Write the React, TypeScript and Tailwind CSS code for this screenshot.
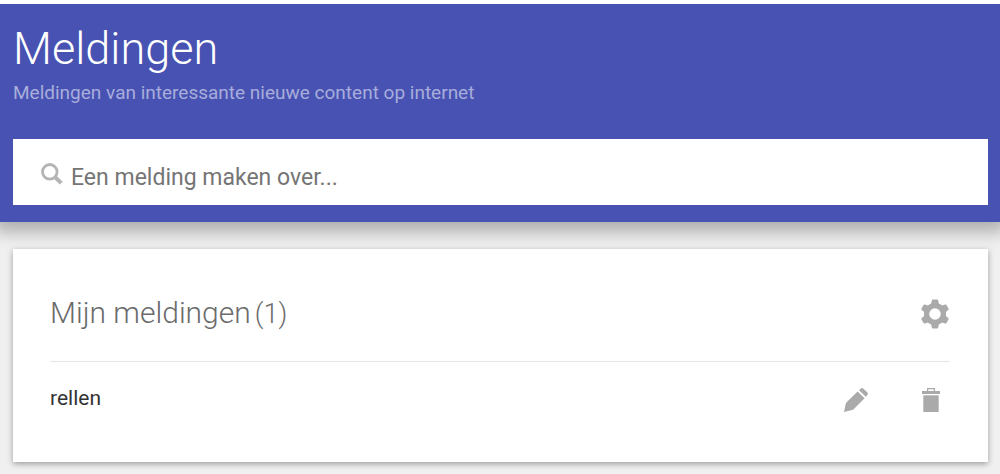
import { useState } from "react";

type Alert = { id: number; query: string };

const INITIAL_ALERTS: Alert[] = [{ id: 1, query: "rellen" }];

const GEAR_TEETH = [0, 60, 120, 180, 240, 300];

function SearchIcon() {
  return (
    <svg viewBox="0 0 22 22" className="size-[22px]" fill="none" stroke="#b4b4b4" aria-hidden="true">
      <circle cx="8.8" cy="8.8" r="7.3" strokeWidth="2.8" />
      <path d="M14 14 20.2 20.2" strokeWidth="4" />
    </svg>
  );
}

function GearIcon() {
  return (
    <svg viewBox="0 0 28 30" className="h-[30px] w-7" fill="#aaaaaa" aria-hidden="true">
      <circle cx="14" cy="15" r="8.4" fill="none" stroke="#aaaaaa" strokeWidth="5.2" />
      {GEAR_TEETH.map((angle) => (
        <path
          key={angle}
          transform={`rotate(${angle} 14 15)`}
          d="M8.4 6.6 10.2 4.6 10.8 1.6Q11 .6 12 .6H16Q17 .6 17.2 1.6L17.8 4.6 19.6 6.6 16 9h-4z"
        />
      ))}
    </svg>
  );
}

function PencilIcon() {
  return (
    <svg viewBox="0 0 24 24" className="size-6" fill="#aaaaaa" aria-hidden="true">
      <path d="M0 24 1.8 15.6Q2 14.8 2.6 14.2L13.6 3.4 20.6 10.2 9.6 21.2Q9 21.8 8.2 22z" />
      <path d="M15 2.2 16.8 0.6Q18-.4 19.4.7L23.2 4.3Q24.5 5.7 23.4 7.1L21.8 8.8z" />
    </svg>
  );
}

function TrashIcon() {
  return (
    <svg viewBox="0 0 18 24" className="h-6 w-[18px]" fill="#aaaaaa" aria-hidden="true">
      <path fillRule="evenodd" d="M5 0h8v3h5v3H0V3h5zM6.3 1.2V3h5.4V1.2z" />
      <path d="M1.3 7.3h15.4V24H1.3z" />
    </svg>
  );
}

export default function App() {
  const [alerts, setAlerts] = useState(INITIAL_ALERTS);
  const [query, setQuery] = useState("");

  return (
    <div className="min-h-screen overflow-x-hidden bg-[#f0f0f0] font-[Roboto,sans-serif]">
      <header className="border-t-4 border-white bg-[#4752b2] pt-[21px] pr-3 pb-[17px] pl-[13px] shadow-[0_4px_16px_6px_rgba(0,0,0,0.28)]">
        <h1 className="text-[45px] leading-12 font-light text-white">Meldingen</h1>
        <p className="mt-[7px] text-[19px] leading-[26px] text-[#a8addb]">
          Meldingen van interessante nieuwe content op internet
        </p>
        <label className="mt-[33px] flex h-[66px] items-center bg-white pr-4 pl-7">
          <span className="pt-1">
            <SearchIcon />
          </span>
          <input
            type="text"
            value={query}
            onChange={(e) => setQuery(e.target.value)}
            aria-label="Een melding maken over"
            placeholder="Een melding maken over..."
            className="ml-2 h-full min-w-0 flex-1 pt-[10px] text-[23px] text-[#444444] outline-none placeholder:text-[#757575]"
          />
        </label>
      </header>

      <main className="pt-[27px] pr-3 pb-3 pl-[13px]">
        <section className="bg-white pt-11 pr-[38px] pb-[50px] pl-[37px] shadow-[0_2px_6px_rgba(0,0,0,0.35)]">
          <div className="flex items-center justify-between border-b border-[#e5e5e5] pb-[27px]">
            <h2 className="flex items-baseline gap-1 text-3xl leading-10 font-light text-[#6b6b6b]">
              Mijn meldingen
              <span className="text-[27px]">({alerts.length})</span>
            </h2>
            <button type="button" aria-label="Instellingen" className="pr-px">
              <GearIcon />
            </button>
          </div>
          <ul>
            {alerts.map((alert) => (
              <li key={alert.id} className="flex items-end justify-between pt-[22px]">
                <a href="#" className="text-[21px] leading-7 text-[#333333]">
                  {alert.query}
                </a>
                <div className="flex items-center gap-[54px] pr-[10px]">
                  <button type="button" aria-label="Bewerken">
                    <PencilIcon />
                  </button>
                  <button
                    type="button"
                    aria-label="Verwijderen"
                    onClick={() => setAlerts(alerts.filter((a) => a.id !== alert.id))}
                  >
                    <TrashIcon />
                  </button>
                </div>
              </li>
            ))}
          </ul>
        </section>
      </main>
    </div>
  );
}
